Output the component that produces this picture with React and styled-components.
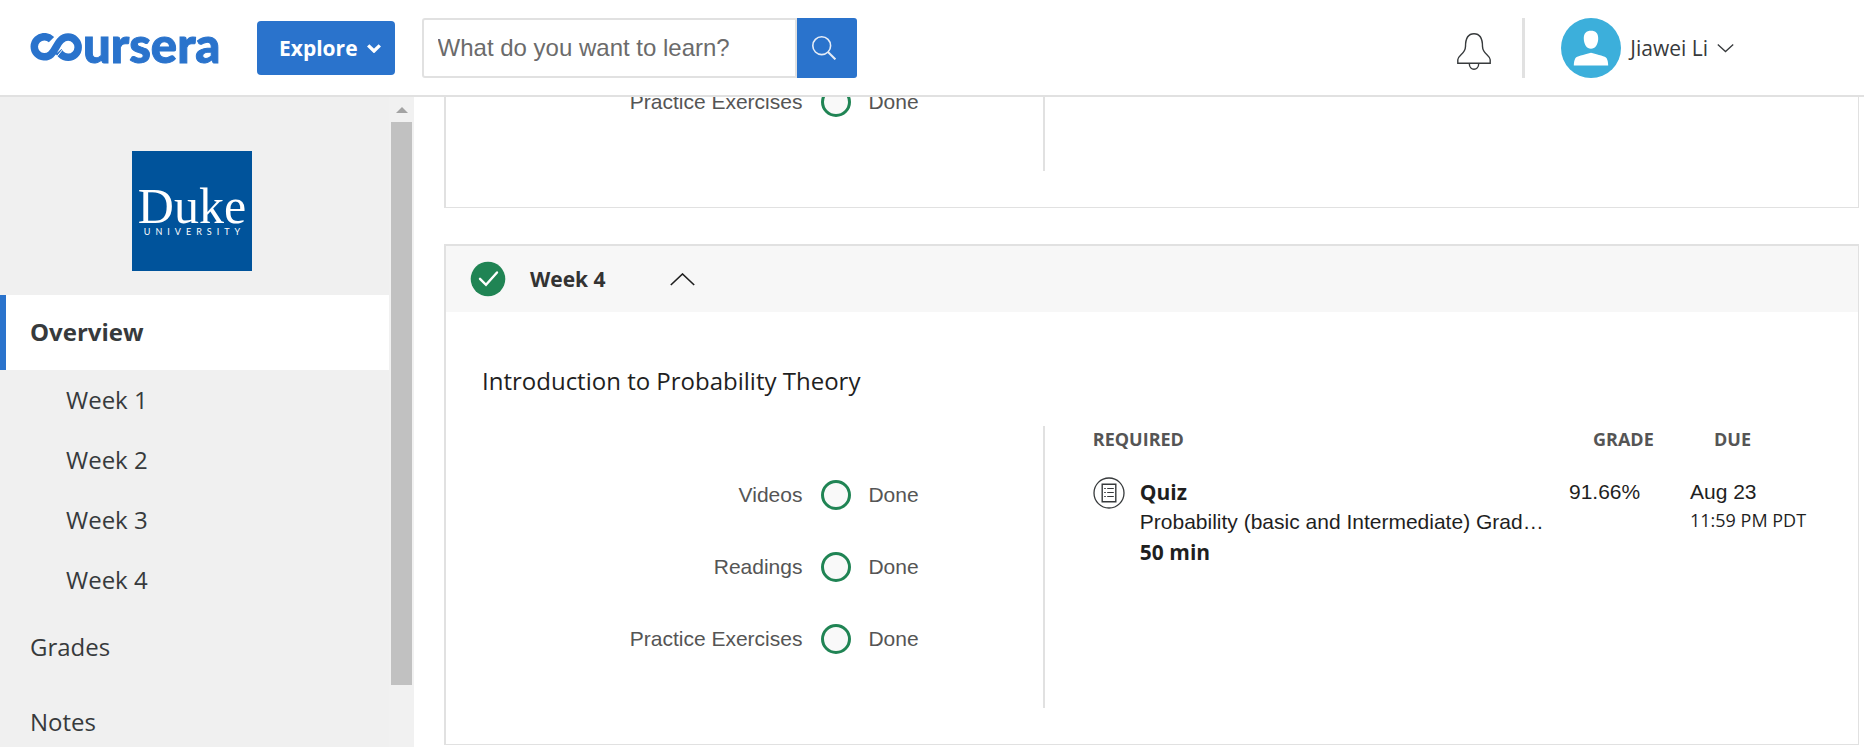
import React from "react";
import styled, { createGlobalStyle, css } from "styled-components";

const sans = `"Open Sans", "Noto Sans", sans-serif`;
const arial = `"Liberation Sans", Arial, sans-serif`;
const blue = "#2a73cc";
const green = "#208454";
const line = "#e1e1e1";

const GlobalStyle = createGlobalStyle`
  *, *::before, *::after { box-sizing: border-box; }
  body { margin: 0; background: #fff; color: #1f1f1f; font-family: ${sans}; }
  button, input { font: inherit; margin: 0; }
  button { cursor: pointer; border: 0; background: none; padding: 0; color: inherit; }
  a { color: inherit; text-decoration: none; }
  ul { list-style: none; margin: 0; padding: 0; }
  svg { display: block; flex: none; }
`;

const Page = styled.div`
  display: flex;
  flex-direction: column;
  height: 100vh;
  overflow: hidden;
`;

const Header = styled.header`
  display: flex;
  align-items: center;
  padding: 18px 130px 17px 30px;
  border-bottom: 2px solid ${line};
  background: #fff;
`;

const Logo = styled.a`
  display: flex;
  align-items: center;
  width: 191px;
  height: 60px;
  margin-right: 36px;
  color: ${blue};
`;

const LogoWord = styled.span`
  font-family: Lato, ${sans};
  font-weight: 900;
  font-size: 49px;
  line-height: 48px;
  padding-bottom: 9px;
  -webkit-text-stroke: 1px ${blue};
`;

const ExploreButton = styled.button`
  display: flex;
  align-items: center;
  gap: 9px;
  height: 54px;
  padding: 0 14px 0 22px;
  margin-right: 27px;
  border-radius: 4px;
  background: ${blue};
  color: #fff;
  font-size: 21px;
  font-weight: 700;
`;

const Search = styled.form`
  display: flex;
  flex: 0 1 435px;
  height: 60px;
`;

const SearchInput = styled.input`
  flex: 1;
  min-width: 0;
  padding: 0 14px;
  border: 2px solid ${line};
  border-radius: 3px 0 0 3px;
  font-family: ${arial};
  font-size: 24px;
  color: #1f1f1f;
  &::placeholder { color: #6b6b6b; opacity: 1; }
`;

const SearchButton = styled.button`
  display: flex;
  align-items: center;
  justify-content: center;
  width: 60px;
  padding-right: 6px;
  border-radius: 0 3px 3px 0;
  background: ${blue};
`;

const Account = styled.div`
  display: flex;
  align-items: center;
  margin-left: auto;
`;

const BellButton = styled.button`
  padding-top: 6px;
`;

const Divider = styled.div`
  width: 3px;
  height: 60px;
  margin: 0 36px 0 31px;
  background: ${line};
`;

const ProfileButton = styled.button`
  display: flex;
  align-items: center;
  gap: 9px;
  font-size: 21px;
  color: #373a3c;
`;

const Body = styled.div`
  display: flex;
  flex: 1;
  min-height: 0;
`;

const Sidebar = styled.aside`
  display: flex;
  flex: none;
  width: 414px;
  background: #f0f0f0;
  overflow: hidden;
`;

const SideContent = styled.div`
  flex: 1;
`;

const Partner = styled.div`
  display: flex;
  justify-content: center;
  padding: 54px 5px 24px 0;
`;

const PartnerLogo = styled.div`
  display: flex;
  flex-direction: column;
  align-items: center;
  width: 120px;
  height: 120px;
  padding-top: 33px;
  background: #00539b;
  color: #fff;
`;

const PartnerName = styled.span`
  font-family: "Liberation Serif", "Times New Roman", serif;
  font-size: 50px;
  line-height: 44px;
`;

const PartnerSub = styled.span`
  font-family: Lato, ${sans};
  font-size: 9px;
  line-height: 8px;
  letter-spacing: 5px;
  padding-left: 5px;
`;

const NavLink = styled.a`
  display: flex;
  align-items: center;
  height: 75px;
  padding: 0 0 2px 24px;
  border-left: 6px solid transparent;
  font-size: 24px;
  color: #373a3c;
  ${(p) => p.$active && css`
    border-left-color: ${blue};
    background: #fff;
    font-weight: 700;
  `}
  ${(p) => p.$sub && css`
    height: 60px;
    padding-left: 60px;
  `}
`;

const ScrollTrack = styled.div`
  display: flex;
  flex-direction: column;
  align-items: center;
  width: 25px;
  padding-top: 10px;
  background: #f1f1f1;
`;

const ScrollThumb = styled.div`
  width: 21px;
  height: 563px;
  margin-top: 9px;
  background: #c1c1c1;
`;

const Main = styled.main`
  flex: 1;
  min-width: 0;
  padding: 0 5px 0 30px;
  overflow: hidden;
`;

/* The list is scrolled so that the previous week runs under the header. */
const WeekList = styled.div`
  display: flex;
  flex-direction: column;
  gap: 36px;
  margin-top: -31px;
`;

const Card = styled.section`
  border: solid ${line};
  border-width: ${(p) => (p.$continued ? "0 1px 1px 2px" : "2px 1px 1px 2px")};
`;

const WeekHeader = styled.button`
  display: flex;
  align-items: center;
  width: 100%;
  height: 66px;
  padding-left: 24px;
  background: #f7f7f7;
`;

const WeekName = styled.span`
  margin: 0 64px 0 24px;
  font-size: 21px;
  font-weight: 700;
  color: #333;
`;

const CardBody = styled.div`
  padding: 0 36px 36px;
`;

const Title = styled.h2`
  margin: 0;
  padding: 51px 0 27px;
  font-size: 24px;
  line-height: 36px;
  font-weight: 400;
`;

const Columns = styled.div`
  display: grid;
  grid-template-columns: 42fr 58fr;
`;

const Progress = styled.ul`
  padding: ${(p) => (p.$continued ? "0 0 33px" : "33px 0")};
  border-right: 2px solid ${line};
`;

const ProgressRow = styled.li`
  display: grid;
  grid-template-columns: 4fr 3fr;
  align-items: center;
  height: 72px;
  font-family: ${arial};
  font-size: 21px;
  color: #555;
`;

const ProgressLabel = styled.span`
  text-align: right;
`;

const ProgressState = styled.span`
  display: flex;
  align-items: center;
  gap: 17px;
  padding-left: 19px;
`;

const Ring = styled.span`
  width: 30px;
  height: 30px;
  border: 3px solid ${green};
  border-radius: 50%;
  background: #f9f9f9;
`;

const Assignments = styled.div`
  padding-left: 48px;
`;

const Table = styled.table`
  width: 100%;
  border-collapse: collapse;
  table-layout: fixed;
`;

const Th = styled.th`
  width: ${(p) => p.$width || "auto"};
  padding: 0 0 0 ${(p) => (p.$inset ? "24px" : "0")};
  text-align: left;
  font-size: 18px;
  line-height: 27px;
  font-weight: 700;
  color: #555;
`;

const Td = styled.td`
  padding: 24px 0 0;
  vertical-align: top;
  font-family: ${arial};
  font-size: 21px;
  line-height: 30px;
`;

const Item = styled.a`
  display: flex;
  gap: 15px;
`;

const ItemText = styled.span`
  display: flex;
  flex-direction: column;
  min-width: 0;
  white-space: nowrap;
`;

const Strong = styled.strong`
  font-family: ${sans};
  font-weight: 700;
`;

const Time = styled.div`
  font-family: ${sans};
  font-size: 18px;
  line-height: 27px;
  white-space: nowrap;
`;

function CourseraLogo() {
  return (
    <Logo href="#" aria-label="Coursera">
      <svg width="53" height="30" viewBox="0 0 53 30" fill="none" stroke="currentColor" strokeWidth="7.500">
        <path d="M21.500 6.600A10.100 10.100 0 1 0 21 21.400C25.500 17 27 10.500 31 7A10.100 10.100 0 1 1 31 21.400L28.600 18.500" />
        <path d="M24.500 26.500L33 16" stroke="#fff" strokeWidth="1" />
      </svg>
      <LogoWord>ursera</LogoWord>
    </Logo>
  );
}

function ProgressItem({ label }) {
  return (
    <ProgressRow>
      <ProgressLabel>{label}</ProgressLabel>
      <ProgressState>
        <Ring />
        <span>Done</span>
      </ProgressState>
    </ProgressRow>
  );
}

const weeks = ["Week 1", "Week 2", "Week 3", "Week 4"];
const progress = ["Videos", "Readings", "Practice Exercises"];

export default function App() {
  return (
    <Page>
      <GlobalStyle />
      <Header>
        <CourseraLogo />
        <ExploreButton type="button">
          Explore
          <svg width="14" height="9" viewBox="0 0 14 9" fill="none" stroke="#fff" strokeWidth="3.400">
            <path d="M1.200 1.400L7 7l5.800-5.600" />
          </svg>
        </ExploreButton>
        <Search role="search" onSubmit={(e) => e.preventDefault()}>
          <SearchInput type="text" aria-label="Search" placeholder="What do you want to learn?" />
          <SearchButton type="submit" aria-label="Submit search">
            <svg width="24" height="24" viewBox="0 0 24 24" fill="none" stroke="#e6edf7" strokeWidth="1.600">
              <circle cx="9.700" cy="9.700" r="8.900" />
              <path d="M16 16l7.400 7.400" strokeWidth="2" />
            </svg>
          </SearchButton>
        </Search>
        <Account>
          <BellButton type="button" aria-label="Notifications">
            <svg width="34" height="37" viewBox="0 0 34 37" fill="none" stroke="#373a3c" strokeWidth="1.400">
              <path d="M.8 30.200v-3.400c0-2 1-3 3-4.800 3.400-3 4.600-4.600 4.700-8.500C8.500 6 10.500.8 17 .8s8.500 5.200 8.500 12.700c.1 3.900 1.300 5.500 4.700 8.500 2 1.800 3 2.800 3 4.800v3.400zM12.300 30.500c0 7.600 9.400 7.600 9.400 0" />
            </svg>
          </BellButton>
          <Divider />
          <ProfileButton type="button">
            <svg width="60" height="60" viewBox="0 0 60 60">
              <circle cx="30" cy="30" r="30" fill="#3cafdb" />
              <path fill="#fff" d="M30 12.800c4.600 0 7.400 2.500 7.200 8.200-.2 5.500-3 9.800-7.200 9.800s-7-4.300-7.200-9.800c-.2-5.700 2.600-8.200 7.200-8.200zM12.800 47.600c.1-3 .5-5.600 1.400-7.200 1.500-2.200 8-3.300 15.800-5.600 7.800 2.300 14.300 3.400 15.800 5.600.9 1.600 1.300 4.200 1.400 7.200z" />
            </svg>
            Jiawei Li
            <svg width="17" height="10" viewBox="0 0 17 10" fill="none" stroke="#373a3c" strokeWidth="1.300">
              <path d="M.8 1.500l7.700 7 7.700-7" />
            </svg>
          </ProfileButton>
        </Account>
      </Header>
      <Body>
        <Sidebar>
          <SideContent>
            <Partner>
              <PartnerLogo>
                <PartnerName>Duke</PartnerName>
                <PartnerSub>UNIVERSITY</PartnerSub>
              </PartnerLogo>
            </Partner>
            <nav aria-label="Course">
              <NavLink href="#" $active aria-current="page">Overview</NavLink>
              {weeks.map((w) => (
                <NavLink key={w} href="#" $sub>{w}</NavLink>
              ))}
              <NavLink href="#">Grades</NavLink>
              <NavLink href="#">Notes</NavLink>
            </nav>
          </SideContent>
          <ScrollTrack aria-hidden="true">
            <svg width="12" height="6" viewBox="0 0 12 6">
              <path d="M6 0l6 6H0z" fill="#a3a3a3" />
            </svg>
            <ScrollThumb />
          </ScrollTrack>
        </Sidebar>
        <Main>
          <WeekList>
            <Card $continued>
              <CardBody>
                <Columns>
                  <Progress $continued>
                    <ProgressItem label="Practice Exercises" />
                  </Progress>
                </Columns>
              </CardBody>
            </Card>
            <Card>
              <WeekHeader type="button" aria-expanded="true">
                <svg width="36" height="36" viewBox="0 0 36 36" fill="none">
                  <circle cx="18" cy="18" r="17.300" fill={green} />
                  <path d="M10 17.800l6 6L27 11.500" stroke="#fff" strokeWidth="2.400" strokeLinecap="round" />
                </svg>
                <WeekName>Week 4</WeekName>
                <svg width="25" height="13" viewBox="0 0 25 13" fill="none" stroke="#1f1f1f" strokeWidth="1.600">
                  <path d="M.8 12L12.500 1l11.700 11" />
                </svg>
              </WeekHeader>
              <CardBody>
                <Title>Introduction to Probability Theory</Title>
                <Columns>
                  <Progress>
                    {progress.map((p) => (
                      <ProgressItem key={p} label={p} />
                    ))}
                  </Progress>
                  <Assignments>
                    <Table>
                      <thead>
                        <tr>
                          <Th scope="col">REQUIRED</Th>
                          <Th scope="col" $width="121px" $inset>GRADE</Th>
                          <Th scope="col" $width="132px" $inset>DUE</Th>
                        </tr>
                      </thead>
                      <tbody>
                        <tr>
                          <Td>
                            <Item href="#">
                              <svg width="32" height="32" viewBox="0 0 32 32" fill="none" stroke="#373a3c">
                                <circle cx="16" cy="16" r="15" strokeWidth="1.300" />
                                <path d="M9.200 7.200h13.600v17.600H9.200z" strokeWidth="1.400" />
                                <path d="M11.200 11.500h1.600M11.200 15.500h1.600M11.200 19.500h1.600M14.200 11.500h6.600M14.200 15.500h6.600M14.200 19.500h6.600" strokeWidth="1.200" />
                              </svg>
                              <ItemText>
                                <Strong>Quiz</Strong>
                                <span>Probability (basic and Intermediate) Grad…</span>
                                <Strong>50 min</Strong>
                              </ItemText>
                            </Item>
                          </Td>
                          <Td>91.66%</Td>
                          <Td>
                            <div>Aug 23</div>
                            <Time>11:59 PM PDT</Time>
                          </Td>
                        </tr>
                      </tbody>
                    </Table>
                  </Assignments>
                </Columns>
              </CardBody>
            </Card>
          </WeekList>
        </Main>
      </Body>
    </Page>
  );
}
